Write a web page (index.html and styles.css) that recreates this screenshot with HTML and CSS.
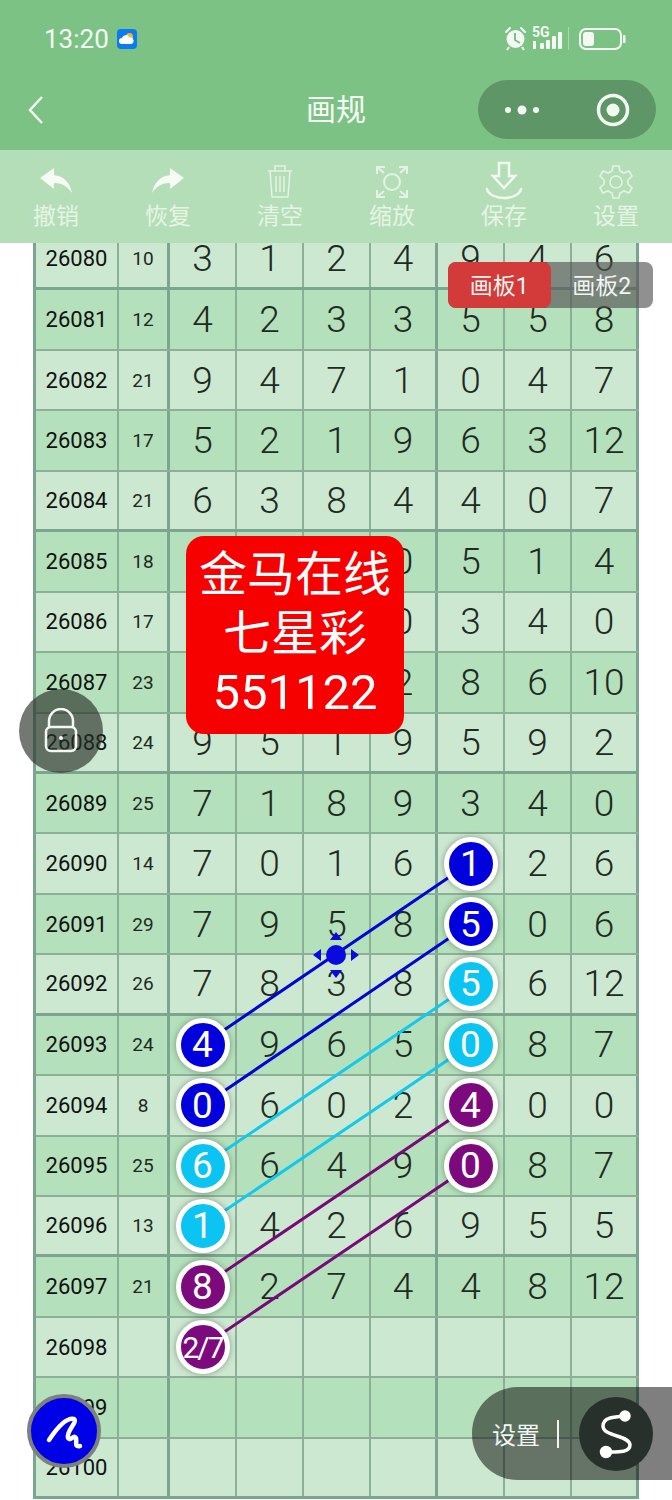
FILE: index.html
```html
<!DOCTYPE html>
<html lang="zh-CN">
  <head>
    <meta charset="UTF-8" />
    <meta name="viewport" content="width=device-width, initial-scale=1.0" />
    <title>画规</title>
    <link rel="stylesheet" href="styles.css">
  </head>
  <body>
    <header class="topBar">
      <div class="statusRow">
        <div class="statusLeft">
          <span class="clock">13:20</span>
          <svg class="weather" width="20" height="20" viewBox="0 0 20 20">
            <rect width="20" height="20" rx="4" fill="#0b7cf0"/>
            <circle cx="12.5" cy="7.5" r="3.5" fill="#f7b23b"/>
            <path d="M5 15a3 3 0 0 1 0-6 4 4 0 0 1 7.500-.5A3.300 3.300 0 0 1 14 15z" fill="#fff"/>
          </svg>
        </div>
        <svg class="statusIcons" width="124" height="30" viewBox="0 0 124 30">
          <g fill="none" stroke="#f4faf3" stroke-width="2">
            <path d="M3 8l4-4M18 4l4 4" stroke-linecap="round"/>
          </g>
          <circle cx="12.500" cy="15" r="9" fill="#f4faf3"/>
          <path d="M12 9v7l5 3" fill="none" stroke="#7dc285" stroke-width="2"/>
          <path d="M6 23l-2 3M19 23l2 3" stroke="#f4faf3" stroke-width="2"/>
          <text class="netText" x="29" y="13">5G</text>
          <path d="M30 17h3v8h-3z" fill="#f4faf3"/>
          <g fill="#f4faf3">
            <rect x="37" y="19" width="4" height="6" rx="1"/>
            <rect x="43" y="16" width="4" height="9" rx="1"/>
            <rect x="49" y="12" width="4" height="13" rx="1"/>
            <rect x="55" y="8" width="4" height="17" rx="1"/>
          </g>
          <rect x="65" y="3" width="1" height="23" fill="#a9d8ae"/>
          <rect x="77" y="5" width="41" height="20" rx="6" fill="none" stroke="#f4faf3" stroke-width="2"/>
          <rect x="80" y="8" width="11" height="14" rx="3" fill="#f4faf3"/>
          <rect x="120" y="11" width="2.500" height="8" rx="1" fill="#f4faf3"/>
        </svg>
      </div>
      <nav class="navRow">
        <svg class="back" width="18" height="30" viewBox="0 0 18 30">
          <path d="M15 2L3 15l12 13" fill="none" stroke="#f2f9f1" stroke-width="2.500"/>
        </svg>
        <h1 class="title">画规</h1>
        <div class="capsule">
          <svg width="36" height="12" viewBox="0 0 36 12">
            <circle cx="4" cy="6" r="3" fill="#f2f9f1"/>
            <circle cx="18" cy="6" r="4.500" fill="#f2f9f1"/>
            <circle cx="32" cy="6" r="3" fill="#f2f9f1"/>
          </svg>
          <svg width="36" height="36" viewBox="0 0 36 36">
            <circle cx="18" cy="18" r="14.500" fill="none" stroke="#f2f9f1" stroke-width="3.500"/>
            <circle cx="18" cy="18" r="6.500" fill="#f2f9f1"/>
          </svg>
        </div>
      </nav>
    </header>

    <section class="toolBar">
      <div class="tool">
        <svg width="34" height="38" viewBox="0 0 34 38"><path d="M1 15L15 5v7c10 1 16 8 18 18-5-7-10-10-18-10v6z" fill="#f6fbf4"/></svg>
        <span>撤销</span>
      </div>
      <div class="tool">
        <svg width="34" height="38" viewBox="0 0 34 38"><path d="M33 15L19 5v7C9 13 3 20 1 30c5-7 10-10 18-10v6z" fill="#f6fbf4"/></svg>
        <span>恢复</span>
      </div>
      <div class="tool">
        <svg width="34" height="38" viewBox="0 0 34 38" fill="none" stroke="#e4f3e3" stroke-width="1.500">
          <path d="M5 8h24M12 8V3h10v5M7 8l2 26h16l2-26M13 13v16M17 13v16M21 13v16"/>
        </svg>
        <span>清空</span>
      </div>
      <div class="tool">
        <svg width="34" height="38" viewBox="0 0 34 38" fill="none" stroke="#e4f3e3" stroke-width="2">
          <circle cx="17" cy="19" r="8"/>
          <path d="M2 11V4h8M24 4h8v7M2 27v7h8M24 34h8v-7M2 4l7 6M32 4l-7 6M2 34l7-6M32 34l-7-6"/>
        </svg>
        <span>缩放</span>
      </div>
      <div class="tool">
        <svg width="40" height="40" viewBox="0 0 40 40" fill="none" stroke="#f2f9f1" stroke-width="2.500">
          <path d="M15 2h10v13h6L20 27 9 15h6z"/>
          <path d="M3 28c3 12 31 12 34 0" stroke-linecap="round"/>
        </svg>
        <span>保存</span>
      </div>
      <div class="tool">
        <svg width="34" height="38" viewBox="0 0 34 38" fill="none" stroke="#e4f3e3" stroke-width="1.600">
          <circle cx="17" cy="19" r="6"/>
          <path d="M14 3h6l1 5 4 2 5-2 3 5-4 4v4l4 4-3 5-5-2-4 2-1 5h-6l-1-5-4-2-5 2-3-5 4-4v-4L1 13l3-5 5 2 4-2z"/>
        </svg>
        <span>设置</span>
      </div>
    </section>

    <main class="board">
      <div class="row end"><div class="id">26080</div><div class="sum">10</div><div>3</div><div>1</div><div>2</div><div>4</div><div>9</div><div>4</div><div>6</div></div>
      <div class="row"><div class="id">26081</div><div class="sum">12</div><div>4</div><div>2</div><div>3</div><div>3</div><div>5</div><div>5</div><div>8</div></div>
      <div class="row"><div class="id">26082</div><div class="sum">21</div><div>9</div><div>4</div><div>7</div><div>1</div><div>0</div><div>4</div><div>7</div></div>
      <div class="row"><div class="id">26083</div><div class="sum">17</div><div>5</div><div>2</div><div>1</div><div>9</div><div>6</div><div>3</div><div>12</div></div>
      <div class="row end"><div class="id">26084</div><div class="sum">21</div><div>6</div><div>3</div><div>8</div><div>4</div><div>4</div><div>0</div><div>7</div></div>
      <div class="row"><div class="id">26085</div><div class="sum">18</div><div></div><div></div><div></div><div>0</div><div>5</div><div>1</div><div>4</div></div>
      <div class="row"><div class="id">26086</div><div class="sum">17</div><div></div><div></div><div></div><div>0</div><div>3</div><div>4</div><div>0</div></div>
      <div class="row"><div class="id">26087</div><div class="sum">23</div><div></div><div></div><div></div><div>2</div><div>8</div><div>6</div><div>10</div></div>
      <div class="row end"><div class="id">26088</div><div class="sum">24</div><div>9</div><div>5</div><div>1</div><div>9</div><div>5</div><div>9</div><div>2</div></div>
      <div class="row"><div class="id">26089</div><div class="sum">25</div><div>7</div><div>1</div><div>8</div><div>9</div><div>3</div><div>4</div><div>0</div></div>
      <div class="row"><div class="id">26090</div><div class="sum">14</div><div>7</div><div>0</div><div>1</div><div>6</div><div><span class="ball blue">1</span></div><div>2</div><div>6</div></div>
      <div class="row"><div class="id">26091</div><div class="sum">29</div><div>7</div><div>9</div><div>5</div><div>8</div><div><span class="ball blue">5</span></div><div>0</div><div>6</div></div>
      <div class="row end"><div class="id">26092</div><div class="sum">26</div><div>7</div><div>8</div><div>3</div><div>8</div><div><span class="ball cyan">5</span></div><div>6</div><div>12</div></div>
      <div class="row"><div class="id">26093</div><div class="sum">24</div><div><span class="ball blue">4</span></div><div>9</div><div>6</div><div>5</div><div><span class="ball cyan">0</span></div><div>8</div><div>7</div></div>
      <div class="row"><div class="id">26094</div><div class="sum">8</div><div><span class="ball blue">0</span></div><div>6</div><div>0</div><div>2</div><div><span class="ball purple">4</span></div><div>0</div><div>0</div></div>
      <div class="row"><div class="id">26095</div><div class="sum">25</div><div><span class="ball cyan">6</span></div><div>6</div><div>4</div><div>9</div><div><span class="ball purple">0</span></div><div>8</div><div>7</div></div>
      <div class="row end"><div class="id">26096</div><div class="sum">13</div><div><span class="ball cyan">1</span></div><div>4</div><div>2</div><div>6</div><div>9</div><div>5</div><div>5</div></div>
      <div class="row"><div class="id">26097</div><div class="sum">21</div><div><span class="ball purple">8</span></div><div>2</div><div>7</div><div>4</div><div>4</div><div>8</div><div>12</div></div>
      <div class="row"><div class="id">26098</div><div class="sum"></div><div><span class="ball purple small">2/7</span></div><div></div><div></div><div></div><div></div><div></div><div></div></div>
      <div class="row"><div class="id">26099</div><div class="sum"></div><div></div><div></div><div></div><div></div><div></div><div></div><div></div></div>
      <div class="row last"><div class="id">26100</div><div class="sum"></div><div></div><div></div><div></div><div></div><div></div><div></div><div></div></div>
    </main>

    <svg class="lines" width="672" height="1500" viewBox="0 0 672 1500">
      <g stroke-width="3">
        <path d="M202 1045L470 863M202 1106L470 924" stroke="#0505d0"/>
        <path d="M202 1166L470 985M202 1226L470 1045" stroke="#14c8ec"/>
        <path d="M202 1287L470 1106M202 1347L470 1166" stroke="#780a78"/>
      </g>
      <g fill="#0a0ae0">
        <circle cx="336" cy="955" r="10"/>
        <path d="M336 932l-6 8h12zM336 978l-6-8h12zM313 955l8-6v12zM359 955l-8-6v12z"/>
      </g>
    </svg>

    <div class="tabs">
      <span class="tab active">画板1</span>
      <span class="tab">画板2</span>
    </div>

    <div class="promo">
      <div>金马在线</div>
      <div>七星彩</div>
      <div class="promoNum">551122</div>
    </div>

    <div class="lock">
      <svg width="36" height="46" viewBox="0 0 36 46" fill="none" stroke="#f5f7f4" stroke-width="2.500">
        <path d="M6 19v-6a12 12 0 0 1 24 0v6"/>
        <rect x="3" y="19" width="30" height="24" rx="5"/>
        <circle cx="18" cy="30" r="2" fill="#f5f7f4" stroke="none"/>
      </svg>
    </div>

    <div class="pen">
      <svg width="66" height="66" viewBox="0 0 66 66" fill="none" stroke="#fff" stroke-width="4.500" stroke-linecap="round" stroke-linejoin="round">
        <path d="M18 42C24 33 34 19 43 21c4 3-8 12-6 19 3 4 5-4 8 0 1 5-2 9 4 8"/>
      </svg>
    </div>

    <div class="settingPill">
      <span class="pillText">设置</span>
      <span class="pillBar"></span>
      <div class="pillKnob">
        <svg width="74" height="74" viewBox="0 0 74 74" fill="none" stroke="#fff" stroke-width="3.500">
          <path d="M46 19C36 20 24 20 24 29 24 40 51 38 51 48 51 56 38 55 27 55"/>
          <circle cx="46" cy="19" r="4" fill="#fff"/>
          <circle cx="27" cy="55" r="4.500" fill="#fff"/>
        </svg>
      </div>
    </div>
  </body>
</html>
```

FILE: styles.css
```css
html {
  font-family: 'Roboto', 'Noto Sans CJK SC', sans-serif;
}
body {
  margin: 0;
  width: 672px;
  height: 1500px;
  position: relative;
  overflow: hidden;
  background: #fff;
}
.topBar {
  background: #7dc285;
  height: 150px;
  position: relative;
  z-index: 5;
}
.statusRow {
  height: 80px;
  display: flex;
  align-items: center;
  justify-content: space-between;
  padding: 0 45px 2px 44px;
  box-sizing: border-box;
}
.statusLeft {
  display: flex;
  align-items: center;
  gap: 8px;
}
.clock {
  font-size: 26px;
  color: #f4faf3;
}
.netText {
  font-size: 14px;
  font-weight: 700;
  fill: #f4faf3;
}
.navRow {
  display: grid;
  grid-template-columns: 1fr auto 1fr;
  align-items: start;
  height: 60px;
  padding: 0 16px;
}
.back {
  margin: 15px 0 0 11px;
}
.title {
  margin: 0;
  font-size: 30px;
  line-height: 59px;
  font-weight: 400;
  color: #f7fbf6;
}
.capsule {
  justify-self: end;
  width: 178px;
  height: 59px;
  border-radius: 30px;
  background: #5e9668;
  display: flex;
  align-items: center;
  justify-content: space-between;
  padding: 0 25px 0 26px;
  box-sizing: border-box;
}
.toolBar {
  height: 93px;
  background: #b4deb8;
  display: flex;
  position: relative;
  z-index: 5;
}
.tool {
  flex: 1;
  display: flex;
  flex-direction: column;
  align-items: center;
  justify-content: flex-end;
  padding-bottom: 11px;
  color: #e6f4e5;
  font-size: 23px;
  line-height: 30px;
}
.tool svg {
  display: block;
  margin-bottom: 1px;
}
.board {
  margin: -13px 0 0 33px;
  width: 606px;
  border-left: 3px solid #7ba58f;
  box-sizing: border-box;
  color: #1e2a22;
}
.row {
  display: grid;
  grid-template-columns: 83px 51px repeat(7, 1fr);
  height: 60.45px;
  box-sizing: border-box;
  border-bottom: 2px solid #8bb097;
  background: #cde8d1;
  font-size: 37px;
  font-weight: 360;
}
.row:nth-child(even) {
  background: #b4e0bb;
}
.row.end {
  border-bottom-width: 3px;
  border-bottom-color: #7ba58f;
}
.row.last {
  border-bottom: 3px solid #7ba58f;
}
.row > div {
  display: flex;
  align-items: center;
  justify-content: center;
  border-right: 2px solid #8bb097;
}
.row > div:nth-child(2),
.row > div:nth-child(6),
.row > div:last-child {
  border-right: 3px solid #7ba58f;
}
.row .id {
  font-size: 22px;
  font-weight: 400;
  color: #111;
}
.row .sum {
  font-size: 19px;
  font-weight: 400;
}
.ball {
  width: 54px;
  height: 54px;
  box-sizing: border-box;
  border-radius: 50%;
  border: 5px solid #fff;
  box-shadow: 0 0 6px rgba(0, 0, 0, 0.35);
  display: flex;
  align-items: center;
  justify-content: center;
  color: #fff;
  font-weight: 400;
  position: relative;
  z-index: 2;
}
.blue {
  background: #0000dc;
}
.cyan {
  background: #0cc4f2;
}
.purple {
  background: #7d0a7d;
}
.small {
  font-size: 30px;
  letter-spacing: -2px;
  white-space: nowrap;
}
.lines {
  position: absolute;
  left: 0;
  top: 0;
  z-index: 1;
}
.tabs {
  position: absolute;
  left: 448px;
  top: 262px;
  width: 205px;
  height: 46px;
  display: flex;
  border-radius: 8px;
  background: rgba(85, 85, 85, 0.65);
  color: #f1f4f0;
  font-size: 23px;
  z-index: 3;
}
.tab {
  flex: 1;
  display: flex;
  align-items: center;
  justify-content: center;
  padding-bottom: 3px;
  border-radius: 8px;
}
.tab.active {
  background: #d33a3a;
}
.promo {
  position: absolute;
  left: 186px;
  top: 536px;
  width: 218px;
  height: 198px;
  box-sizing: border-box;
  padding-top: 9px;
  border-radius: 18px;
  background: #f70000;
  color: #fff;
  font-size: 48px;
  line-height: 59px;
  text-align: center;
  z-index: 3;
}
.promoNum {
  font-size: 49px;
}
.lock {
  position: absolute;
  left: 19px;
  top: 689px;
  width: 84px;
  height: 84px;
  border-radius: 50%;
  background: rgba(40, 48, 40, 0.65);
  display: flex;
  align-items: center;
  justify-content: center;
  z-index: 3;
}
.pen {
  position: absolute;
  left: 27px;
  top: 1394px;
  width: 66px;
  height: 66px;
  border-radius: 50%;
  border: 4px solid #7c817c;
  background: #0000e6;
  z-index: 3;
}
.settingPill {
  position: absolute;
  left: 472px;
  top: 1387px;
  width: 200px;
  height: 93px;
  border-radius: 46px 0 0 46px;
  background: rgba(0, 0, 0, 0.5);
  display: flex;
  align-items: center;
  color: #f2f4f2;
  font-size: 24px;
  z-index: 3;
}
.pillText {
  margin-left: 20px;
}
.pillBar {
  width: 2px;
  height: 28px;
  margin-left: 17px;
  background: #f2f4f2;
}
.pillKnob {
  width: 74px;
  height: 74px;
  margin-left: 20px;
  border-radius: 50%;
  background: #28302b;
}
```
